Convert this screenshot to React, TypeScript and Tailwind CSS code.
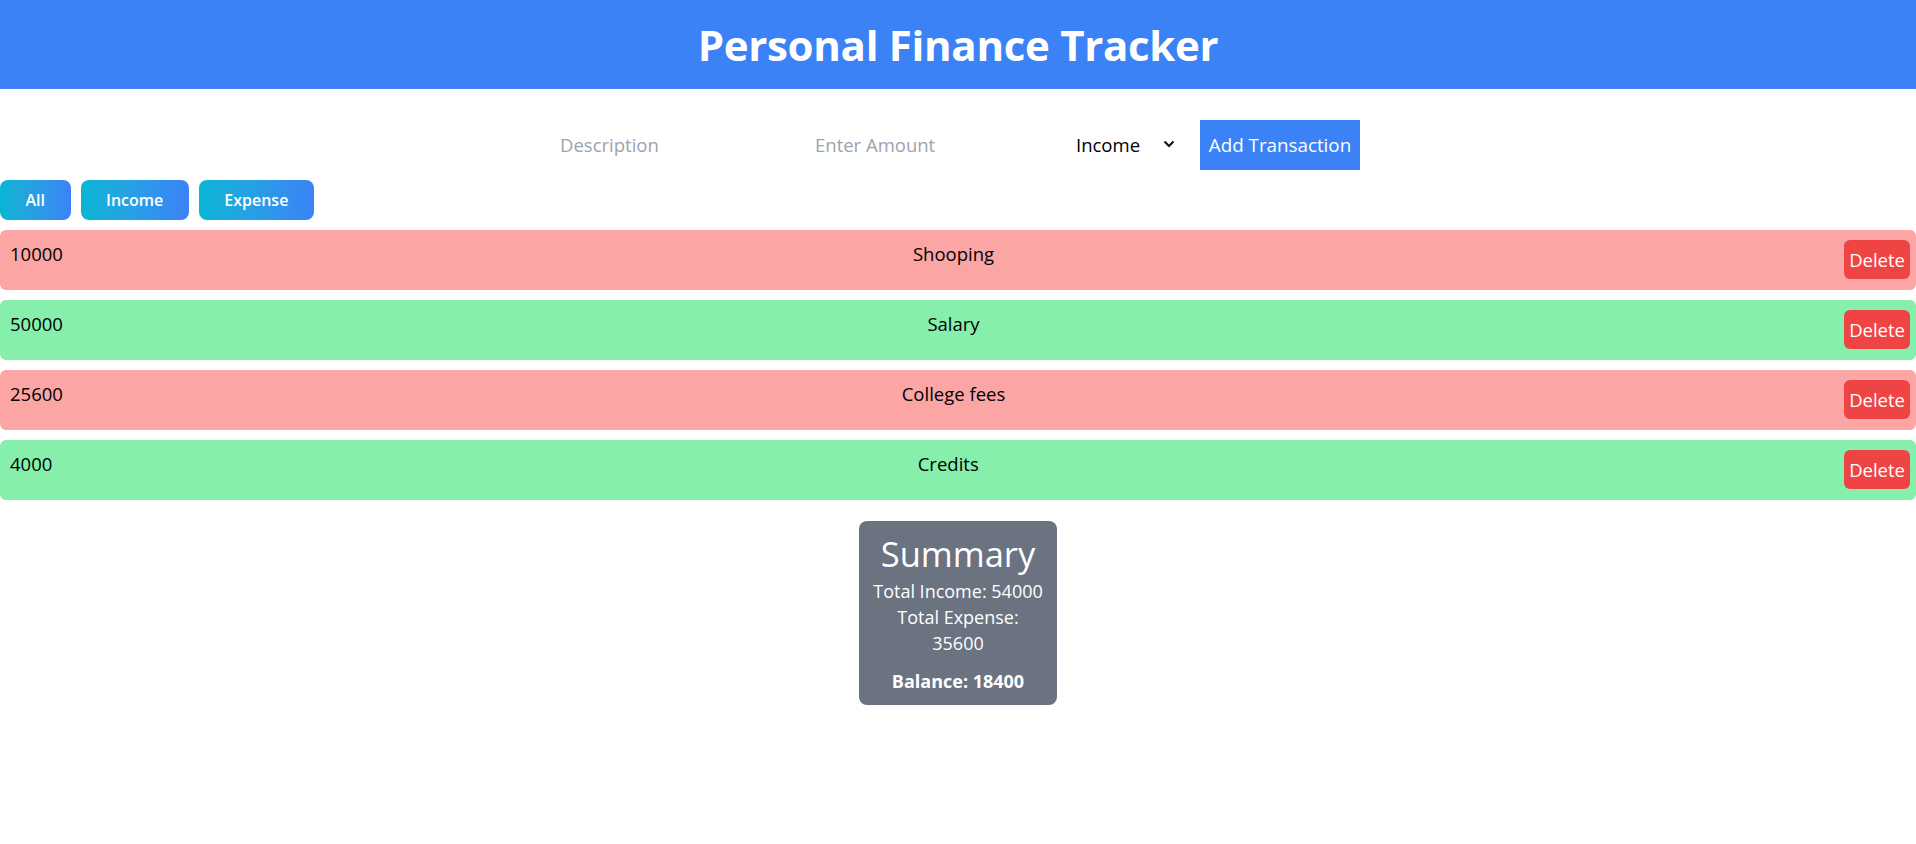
import React from "react";

type Tx = { id: number; amount: number; desc: string; type: "income" | "expense" };

const txs: Tx[] = [
  { id: 1, amount: 10000, desc: "Shooping", type: "expense" },
  { id: 2, amount: 50000, desc: "Salary", type: "income" },
  { id: 3, amount: 25600, desc: "College fees", type: "expense" },
  { id: 4, amount: 4000, desc: "Credits", type: "income" },
];

export default function App() {
  return (
    <div className="min-h-screen bg-white text-black" style={{ fontFamily: '"Open Sans", "Noto Sans", sans-serif' }}>
      <header className="h-[89px] bg-[#3b82f6] flex items-center justify-center">
        <h1 className="text-white font-bold text-[42px] tracking-[-0.3px] leading-none">Personal Finance Tracker</h1>
      </header>

      <form className="mt-[31px] flex justify-center gap-[4px] h-[50px]" onSubmit={(e) => e.preventDefault()}>
        <input
          type="text"
          placeholder="Description"
          className="w-[251px] pl-[4px] text-[18.5px] outline-none placeholder:text-[#9ca3af] bg-transparent"
        />
        <input
          type="number"
          placeholder="Enter Amount"
          className="w-[251px] pl-[4px] text-[18.5px] outline-none placeholder:text-[#9ca3af] bg-transparent"
        />
        <div className="relative w-[130px]">
          <select className="appearance-none w-full h-full pl-[10px] text-[18.5px] bg-transparent outline-none text-black">
            <option>Income</option>
            <option>Expense</option>
          </select>
          <svg
            className="absolute left-[97px] top-[20px] pointer-events-none"
            width="12"
            height="8"
            viewBox="0 0 12 8"
            fill="none"
          >
            <path d="M1.5 1.5 L6 6 L10.5 1.5" stroke="#111" strokeWidth="2" />
          </svg>
        </div>
        <button type="submit" className="w-[160px] bg-[#3b82f6] text-white text-[18.8px]">
          Add Transaction
        </button>
      </form>

      <div className="mt-[10px] flex gap-[10px]">
        {["All", "Income", "Expense"].map((l) => (
          <button
            key={l}
            className="h-[40px] px-[25.5px] rounded-lg bg-linear-to-r from-[#06b6d4] to-[#3b82f6] text-white font-semibold text-[16px]"
          >
            {l}
          </button>
        ))}
      </div>

      <div className="mt-[10px] flex flex-col gap-[10px]">
        {txs.map((t) => (
          <div
            key={t.id}
            className={`h-[60px] flex justify-between items-start pt-[10px] pl-[10px] pr-[6px] rounded-md text-[18.5px] leading-[28px] ${
              t.type === "expense" ? "bg-[#fca5a5]" : "bg-[#86efac]"
            }`}
          >
            <span>{t.amount}</span>
            <span>{t.desc}</span>
            <button className="h-[39px] px-[5px] rounded-md bg-[#ef4444] text-white text-[18.5px]">Delete</button>
          </div>
        ))}
      </div>

      <div className="mt-[21px] mx-auto w-[198px] bg-[#6b7280] rounded-lg text-white text-center pt-[9px] pb-[11px] px-[12px]">
        <h2 className="text-[34.5px] leading-[48px]">Summary</h2>
        <p className="text-[18px] leading-[26px]">Total Income: 54000</p>
        <p className="text-[18px] leading-[26px]">Total Expense: 35600</p>
        <p className="text-[18px] leading-[26px] font-bold mt-[12px]">Balance: 18400</p>
      </div>
    </div>
  );
}
